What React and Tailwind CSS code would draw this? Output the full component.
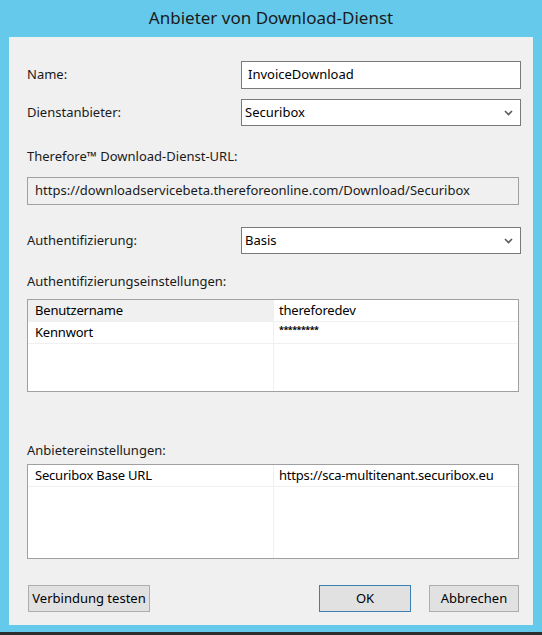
import React from "react";

const font = { fontFamily: '"Noto Sans", "Liberation Sans", sans-serif' };

function Chevron() {
  return (
    <svg width="9" height="6" viewBox="0 0 9 6" className="shrink-0">
      <path d="M1 1 L4.5 4.5 L8 1" fill="none" stroke="#5a5a5a" strokeWidth="1.6" />
    </svg>
  );
}

function Select({ value }) {
  return (
    <div className="flex h-[27px] w-[280px] items-center justify-between border border-[#7a7a7a] bg-white pl-[3px] pr-[7px]">
      <span className="text-[13px] text-[#000]">{value}</span>
      <Chevron />
    </div>
  );
}

function Row({ label, children, mt }) {
  return (
    <div className={`flex items-center ${mt}`}>
      <div className="w-[214px] text-[13px] text-[#1a1a1a]">{label}</div>
      {children}
    </div>
  );
}

function ListBox({ rows, height, selectedFirst }) {
  return (
    <div className={`relative mr-[14px] flex ${height} border border-[#a0a0a0] bg-white`}>
      <div className="flex w-[246px] flex-col border-r border-[#f0f0f0]">
        {rows.map((r, i) => (
          <div
            key={i}
            className={`flex h-[22px] items-center border-b border-[#f0f0f0] pl-[7px] text-[13px] tracking-[-0.2px] text-[#000] ${selectedFirst && i === 0 ? "bg-[#f0f0f0]" : ""}`}
          >
            {r[0]}
          </div>
        ))}
      </div>
      <div className="flex flex-1 flex-col">
        {rows.map((r, i) => (
          <div key={i} className="flex h-[22px] items-center border-b border-[#f0f0f0] pl-[5px] text-[13px] tracking-[-0.2px] text-[#000]">
            {r[1]}
          </div>
        ))}
      </div>
    </div>
  );
}

function Button({ children, w, primary }) {
  return (
    <div
      className={`flex h-[27px] ${w} items-center justify-center border bg-[#e1e1e1] text-[13px] text-[#000] ${primary ? "border-[#3c7fb1]" : "border-[#adadad]"}`}
    >
      {children}
    </div>
  );
}

export default function App() {
  return (
    <div className="flex h-[635px] w-[542px] flex-col bg-[#64c9ea]" style={font}>
      <div className="flex h-[37px] items-center justify-center pb-[1px] text-[17px] text-[#1b1b1b]">
        Anbieter von Download-Dienst
      </div>
      <div className="mx-[9px] flex h-[588px] flex-col bg-[#f0f0f0] pl-[18px]">
        <Row label="Name:" mt="mt-[24px]">
          <div className="flex h-[28px] w-[280px] items-center border border-[#7a7a7a] bg-white pl-[6px] text-[13px] text-[#000]">
            InvoiceDownload
          </div>
        </Row>
        <Row label="Dienstanbieter:" mt="mt-[10px]">
          <Select value="Securibox" />
        </Row>
        <div className="mt-[22px] h-[16px] text-[13px] leading-[16px] text-[#1a1a1a]">
          Therefore™ Download-Dienst-URL:
        </div>
        <div className="mr-[14px] mt-[13px] flex h-[28px] items-center border border-[#a0a0a0] bg-[#f0f0f0] pl-[7px] text-[13px] text-[#1a1a1a]">
          https://downloadservicebeta.thereforeonline.com/Download/Securibox
        </div>
        <Row label="Authentifizierung:" mt="mt-[22px]">
          <Select value="Basis" />
        </Row>
        <div className="mt-[19px] h-[16px] text-[13px] leading-[16px] text-[#1a1a1a]">
          Authentifizierungseinstellungen:
        </div>
        <div className="mt-[10px]">
          <ListBox
            height="h-[93px]"
            selectedFirst
            rows={[
              ["Benutzername", "thereforedev"],
              [
                "Kennwort",
                <span className="mb-[7px] text-[9px] font-bold leading-[9px] tracking-[-0.5px]">*********</span>,
              ],
            ]}
          />
        </div>
        <div className="mt-[50px] h-[16px] text-[13px] leading-[16px] text-[#1a1a1a]">
          Anbietereinstellungen:
        </div>
        <div className="mt-[6px]">
          <ListBox
            height="h-[95px]"
            rows={[["Securibox Base URL", "https://sca-multitenant.securibox.eu"]]}
          />
        </div>
        <div className="mr-[14px] mt-[26px] flex items-center pl-[1px]">
          <Button w="w-[122px]">Verbindung testen</Button>
          <div className="flex-1" />
          <Button w="w-[92px]" primary>OK</Button>
          <div className="w-[18px]" />
          <Button w="w-[90px]">Abbrechen</Button>
        </div>
      </div>
      <div className="h-[7px]" />
      <div className="h-[3px] bg-[#2d2d2d]" />
    </div>
  );
}
